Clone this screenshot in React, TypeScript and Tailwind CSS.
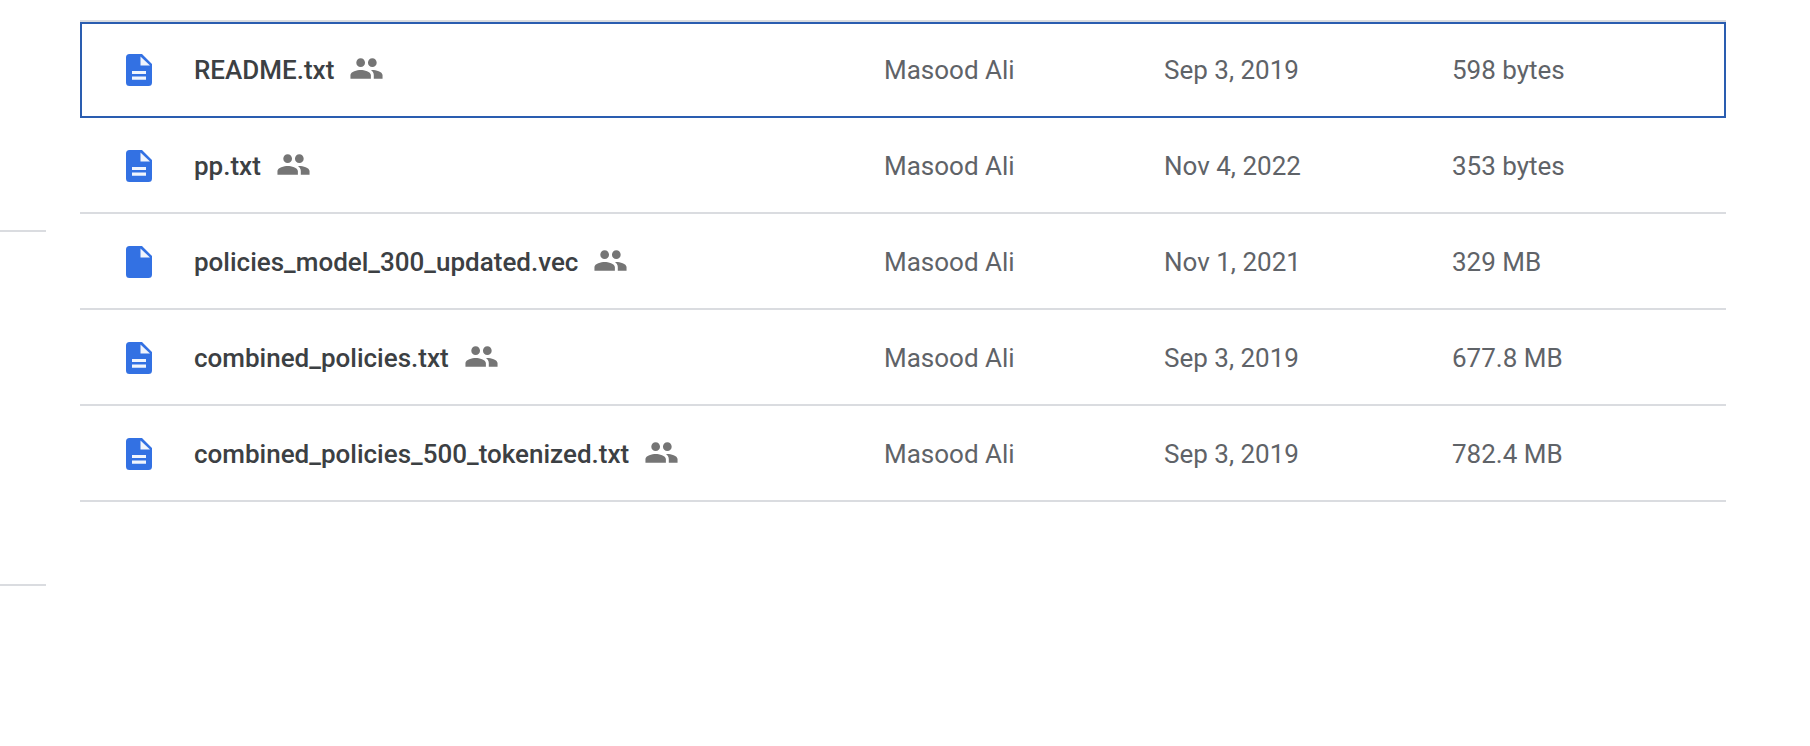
const files = [
  { name: "README.txt", date: "Sep 3, 2019", size: "598 bytes", lines: true },
  { name: "pp.txt", date: "Nov 4, 2022", size: "353 bytes", lines: true },
  { name: "policies_model_300_updated.vec", date: "Nov 1, 2021", size: "329 MB", lines: false },
  { name: "combined_policies.txt", date: "Sep 3, 2019", size: "677.8 MB", lines: true },
  { name: "combined_policies_500_tokenized.txt", date: "Sep 3, 2019", size: "782.4 MB", lines: true },
];

function FileIcon({ lines }: { lines: boolean }) {
  return (
    <svg width="26" height="32" viewBox="0 0 26 32" className="block">
      <path
        d="M3.5 0H16l10 10v18.5a3.5 3.5 0 0 1-3.5 3.5h-19A3.5 3.5 0 0 1 0 28.5v-25A3.5 3.5 0 0 1 3.5 0z"
        fill="#3371e3"
      />
      <path d="M14.5 2.5 24 11.5H14.5z" fill="#f1f5fd" />
      {lines && <path d="M6 17h14v3H6zM6 22.5h14v3.3H6z" fill="#f1f5fd" />}
    </svg>
  );
}

function SharedIcon() {
  return (
    <svg width="35" height="35" viewBox="0 0 24 24" fill="#757575" className="-mt-[3px] block shrink-0">
      <path d="M16 11c1.66 0 2.99-1.34 2.99-3S17.66 5 16 5c-1.66 0-3 1.34-3 3s1.34 3 3 3zm-8 0c1.66 0 2.99-1.34 2.99-3S9.66 5 8 5C6.34 5 5 6.34 5 8s1.34 3 3 3zm0 2c-2.33 0-7 1.17-7 3.5V19h14v-2.5c0-2.33-4.67-3.5-7-3.5zm8 0c-.29 0-.62.02-.97.05 1.16.84 1.97 1.97 1.97 3.45V19h6v-2.5c0-2.33-4.67-3.5-7-3.5z" />
    </svg>
  );
}

export default function App() {
  return (
    <div className="flex h-[746px] w-[1810px] overflow-hidden bg-white font-['Roboto',sans-serif] text-[26px] text-[#5f6368]">
      <div className="w-[80px] shrink-0 pt-[230px]">
        <div className="h-[2px] w-[46px] bg-[#dadce0]" />
        <div className="mt-[352px] h-[2px] w-[46px] bg-[#dadce0]" />
      </div>
      <div className="w-[1646px] pt-[20px]">
        <div className="h-[2px] w-full bg-[#dadce0]" />
        {files.map((file, i) => (
          <div
            key={file.name}
            className={
              i === 0
                ? "box-border grid h-[96px] grid-cols-[114px_690px_280px_288px_1fr] items-center outline-2 -outline-offset-2 outline-[#2a5db0]"
                : "box-border grid h-[96px] grid-cols-[114px_690px_280px_288px_1fr] items-center border-b-2 border-[#dadce0] pt-[2px]"
            }
          >
            <div className="pl-[46px]">
              <FileIcon lines={file.lines} />
            </div>
            <div className="flex items-center gap-[15px] font-medium text-[#3c4043]">
              <span>{file.name}</span>
              <SharedIcon />
            </div>
            <div>Masood Ali</div>
            <div>{file.date}</div>
            <div>{file.size}</div>
          </div>
        ))}
      </div>
    </div>
  );
}
